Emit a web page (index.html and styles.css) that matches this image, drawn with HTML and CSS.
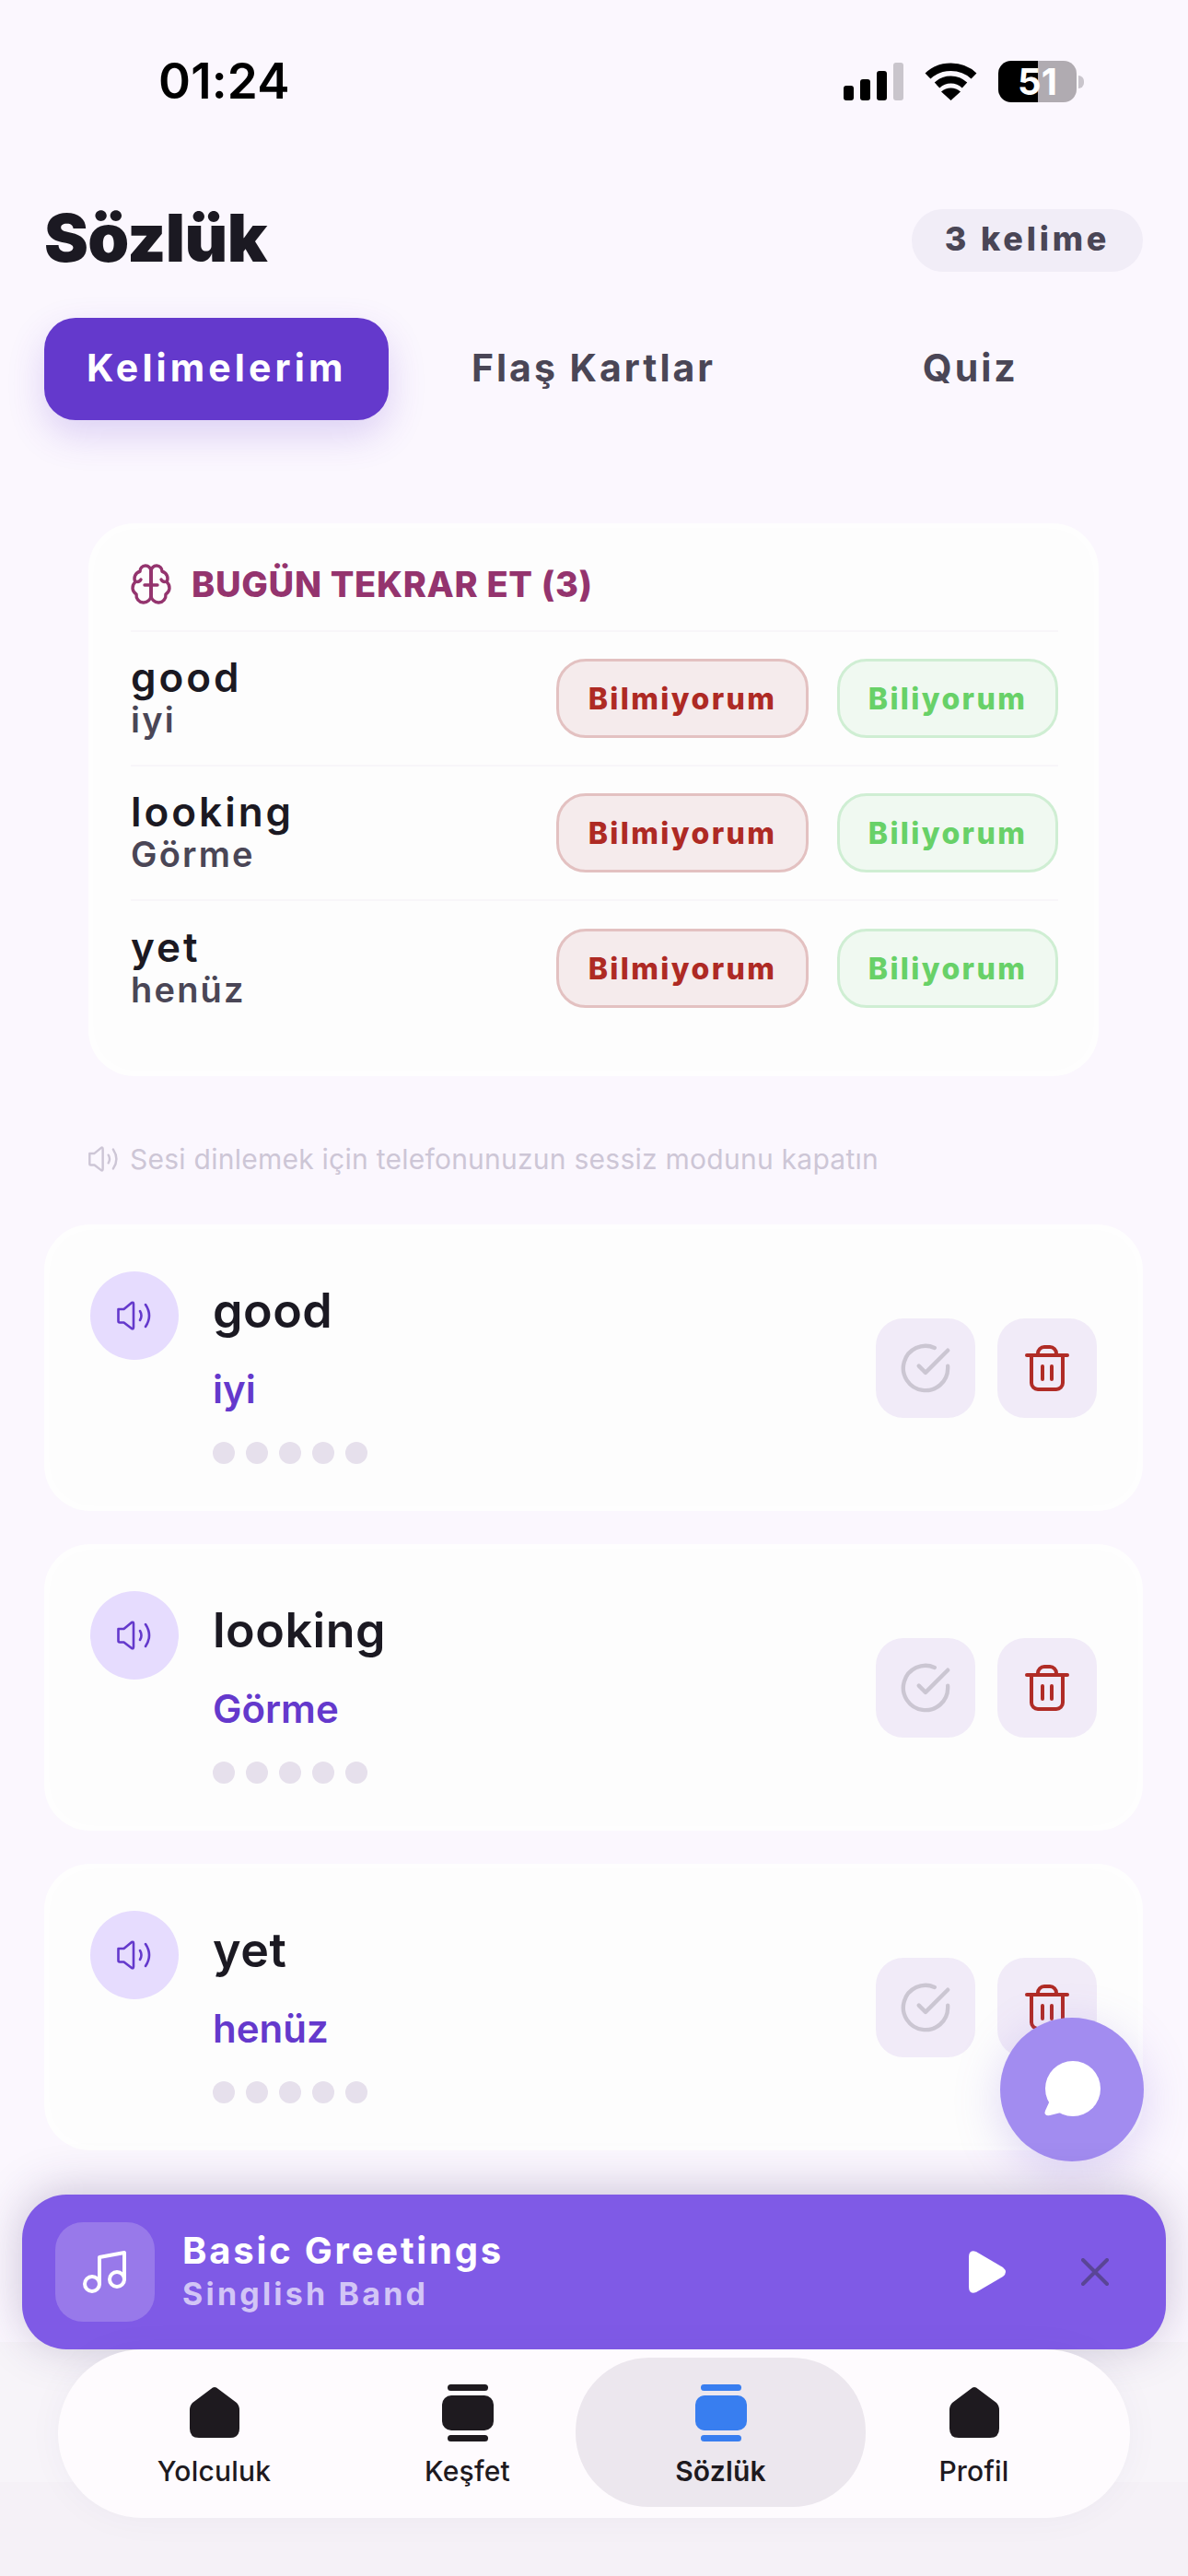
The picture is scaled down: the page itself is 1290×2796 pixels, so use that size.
FILE: index.html
```html
<!DOCTYPE html>
<html lang="tr">

<head>
  <meta charset="UTF-8">
  <title>Sözlük</title>
  <link rel="stylesheet" href="styles.css">
</head>

<body>
  <div class="phone">
    <!-- status bar -->
    <div class="status">
      <span class="clock">01:24</span>
      <div class="status-icons">
        <div class="signal">
          <i class="bar-1"></i><i class="bar-2"></i><i class="bar-3"></i><i class="bar-4"></i>
        </div>
        <svg class="wifi" viewBox="0 0 57 42">
          <path d="M3.5 15.5C17 2.5 40 2.5 53.5 15.5" fill="none" stroke="#000" stroke-width="8.5" />
          <path d="M13.5 25.5C22 17.5 35 17.5 43.5 25.5" fill="none" stroke="#000" stroke-width="8" />
          <path d="M28.500 42L18 32.500C24 27 33 27 39 32.500Z" />
        </svg>
        <div class="battery"><span>51</span></div>
        <i class="battery-nub"></i>
      </div>
    </div>

    <header class="top">
      <h1>Sözlük</h1>
      <span class="count">3 kelime</span>
    </header>

    <nav class="tabs">
      <button class="tab active">Kelimelerim</button>
      <button class="tab">Flaş Kartlar</button>
      <button class="tab">Quiz</button>
    </nav>

    <!-- review -->
    <section class="review">
      <h2>
        <svg viewBox="0 0 24 24" fill="none" stroke="#94346e" stroke-width="1.7" stroke-linecap="round" stroke-linejoin="round">
          <path d="M12 5a3 3 0 1 0-5.997.125 4 4 0 0 0-2.526 5.77 4 4 0 0 0 .556 6.588A4 4 0 1 0 12 18Z" />
          <path d="M12 5a3 3 0 1 1 5.997.125 4 4 0 0 1 2.526 5.77 4 4 0 0 1-.556 6.588A4 4 0 1 1 12 18Z" />
          <path d="M12 5V18M8.500 12.500H15.500M3.500 10.500C5 11 6 10.500 6.500 9.500M20.500 10.500C19 11 18 10.500 17.500 9.500" />
        </svg>
        BUGÜN TEKRAR ET (3)
      </h2>
      <div class="review-row">
        <div class="review-text"><b>good</b><span>iyi</span></div>
        <button class="btn-no">Bilmiyorum</button>
        <button class="btn-yes">Biliyorum</button>
      </div>
      <div class="review-row">
        <div class="review-text"><b>looking</b><span>Görme</span></div>
        <button class="btn-no">Bilmiyorum</button>
        <button class="btn-yes">Biliyorum</button>
      </div>
      <div class="review-row">
        <div class="review-text"><b>yet</b><span>henüz</span></div>
        <button class="btn-no">Bilmiyorum</button>
        <button class="btn-yes">Biliyorum</button>
      </div>
    </section>

    <p class="note">
      <svg viewBox="0 0 38 32" fill="none" stroke="#cdc6d6" stroke-width="2.800" stroke-linecap="round" stroke-linejoin="round">
        <path d="M1.500 9H7.500L16 2Q18 1 18 3.500V28.500Q18 31 16 30L7.500 23.500H3Q1.500 23.500 1.500 22Z" />
        <path d="M25 11Q28 16 25 21M31 4Q39 16 31 28" />
      </svg>
      Sesi dinlemek için telefonunuzun sessiz modunu kapatın
    </p>

    <!-- words -->
    <article class="word-card">
      <button class="sound">
        <svg viewBox="0 0 38 32" fill="none" stroke="#6439cc" stroke-width="2.600" stroke-linecap="round" stroke-linejoin="round">
          <path d="M1.500 9H7.500L16 2Q18 1 18 3.500V28.500Q18 31 16 30L7.500 23.500H3Q1.500 23.500 1.500 22Z" />
          <path d="M25 11Q28 16 25 21M31 4Q39 16 31 28" />
        </svg>
      </button>
      <div class="word-info">
        <h3>good</h3>
        <p>iyi</p>
        <div class="dots"><i></i><i></i><i></i><i></i><i></i></div>
      </div>
      <div class="actions">
        <button class="action">
          <svg viewBox="0 0 24 24" fill="none" stroke="#cbc6d2" stroke-width="1.800" stroke-linecap="round" stroke-linejoin="round">
            <path d="M22 11.080V12a10 10 0 1 1-5.930-9.140" />
            <path d="M22 4L12 14.010l-3-3" />
          </svg>
        </button>
        <button class="action">
          <svg class="trash" viewBox="0 0 48 50" fill="none" stroke="#b02c26" stroke-width="4" stroke-linecap="round" stroke-linejoin="round">
            <path d="M2 11H46M7 11V41A7 7 0 0 0 14 48H34A7 7 0 0 0 41 41V11M14 11V9A7 7 0 0 1 21 2H27A7 7 0 0 1 34 9V11M19 23V37M29 23V37" />
          </svg>
        </button>
      </div>
    </article>

    <article class="word-card">
      <button class="sound">
        <svg viewBox="0 0 38 32" fill="none" stroke="#6439cc" stroke-width="2.600" stroke-linecap="round" stroke-linejoin="round">
          <path d="M1.500 9H7.500L16 2Q18 1 18 3.500V28.500Q18 31 16 30L7.500 23.500H3Q1.500 23.500 1.500 22Z" />
          <path d="M25 11Q28 16 25 21M31 4Q39 16 31 28" />
        </svg>
      </button>
      <div class="word-info">
        <h3>looking</h3>
        <p>Görme</p>
        <div class="dots"><i></i><i></i><i></i><i></i><i></i></div>
      </div>
      <div class="actions">
        <button class="action">
          <svg viewBox="0 0 24 24" fill="none" stroke="#cbc6d2" stroke-width="1.800" stroke-linecap="round" stroke-linejoin="round">
            <path d="M22 11.080V12a10 10 0 1 1-5.930-9.140" />
            <path d="M22 4L12 14.010l-3-3" />
          </svg>
        </button>
        <button class="action">
          <svg class="trash" viewBox="0 0 48 50" fill="none" stroke="#b02c26" stroke-width="4" stroke-linecap="round" stroke-linejoin="round">
            <path d="M2 11H46M7 11V41A7 7 0 0 0 14 48H34A7 7 0 0 0 41 41V11M14 11V9A7 7 0 0 1 21 2H27A7 7 0 0 1 34 9V11M19 23V37M29 23V37" />
          </svg>
        </button>
      </div>
    </article>

    <article class="word-card">
      <button class="sound">
        <svg viewBox="0 0 38 32" fill="none" stroke="#6439cc" stroke-width="2.600" stroke-linecap="round" stroke-linejoin="round">
          <path d="M1.500 9H7.500L16 2Q18 1 18 3.500V28.500Q18 31 16 30L7.500 23.500H3Q1.500 23.500 1.500 22Z" />
          <path d="M25 11Q28 16 25 21M31 4Q39 16 31 28" />
        </svg>
      </button>
      <div class="word-info">
        <h3>yet</h3>
        <p>henüz</p>
        <div class="dots"><i></i><i></i><i></i><i></i><i></i></div>
      </div>
      <div class="actions">
        <button class="action">
          <svg viewBox="0 0 24 24" fill="none" stroke="#cbc6d2" stroke-width="1.800" stroke-linecap="round" stroke-linejoin="round">
            <path d="M22 11.080V12a10 10 0 1 1-5.930-9.140" />
            <path d="M22 4L12 14.010l-3-3" />
          </svg>
        </button>
        <button class="action">
          <svg class="trash" viewBox="0 0 48 50" fill="none" stroke="#b02c26" stroke-width="4" stroke-linecap="round" stroke-linejoin="round">
            <path d="M2 11H46M7 11V41A7 7 0 0 0 14 48H34A7 7 0 0 0 41 41V11M14 11V9A7 7 0 0 1 21 2H27A7 7 0 0 1 34 9V11M19 23V37M29 23V37" />
          </svg>
        </button>
      </div>
    </article>

    <!-- floating chat -->
    <button class="fab">
      <svg viewBox="0 0 64 64" fill="#fff">
        <circle cx="33" cy="31" r="30" />
        <path d="M8 44L3 55Q1 61 8 60L24 56Z" />
      </svg>
    </button>

    <!-- bottom dock -->
    <div class="dock">
      <div class="player">
        <div class="art">
          <svg viewBox="0 0 52 52" fill="none" stroke="#fff" stroke-width="4" stroke-linecap="round" stroke-linejoin="round">
            <circle cx="12" cy="39" r="8" />
            <circle cx="39" cy="34" r="8" />
            <path d="M20 39V10L47 5V34" />
          </svg>
        </div>
        <div class="track">
          <strong>Basic Greetings</strong>
          <span>Singlish Band</span>
        </div>
        <svg class="play" viewBox="0 0 41 46" fill="#fff">
          <path d="M0 7Q0 -2 8 1L37 18Q43 23 37 28L8 45Q0 48 0 39Z" />
        </svg>
        <svg class="close" viewBox="0 0 30 30" fill="none" stroke="#5a4596" stroke-width="4" stroke-linecap="round">
          <path d="M2 2L28 28M28 2L2 28" />
        </svg>
      </div>

      <nav class="bottom-nav">
        <a class="nav-item">
          <svg class="nav-home" viewBox="0 0 54 56">
            <path d="M23 3Q27 -1 31 3L51 18Q54 21 54 26V46Q54 56 44 56H10Q0 56 0 46V26Q0 21 3 18Z" />
          </svg>
          Yolculuk
        </a>
        <a class="nav-item">
          <svg class="nav-cards" viewBox="0 0 56 62">
            <rect x="6" width="44" height="7" rx="3.500" />
            <rect y="12" width="56" height="38" rx="10" />
            <rect x="6" y="55" width="44" height="7" rx="3.500" />
          </svg>
          Keşfet
        </a>
        <a class="nav-item current">
          <svg class="nav-cards" viewBox="0 0 56 62">
            <rect x="6" width="44" height="7" rx="3.500" />
            <rect y="12" width="56" height="38" rx="10" />
            <rect x="6" y="55" width="44" height="7" rx="3.500" />
          </svg>
          Sözlük
        </a>
        <a class="nav-item">
          <svg class="nav-home" viewBox="0 0 54 56">
            <path d="M23 3Q27 -1 31 3L51 18Q54 21 54 26V46Q54 56 44 56H10Q0 56 0 46V26Q0 21 3 18Z" />
          </svg>
          Profil
        </a>
      </nav>
    </div>
  </div>
</body>

</html>
```

FILE: styles.css
```css
* {
  box-sizing: border-box;
}

body {
  margin: 0;
  background-color: #fbf7fe;
  font-family: Inter, "Noto Sans", sans-serif;
  color: #1b1922;
}

button {
  font-family: inherit;
  border: none;
  padding: 0;
}

.phone {
  position: relative;
  width: 1290px;
  height: 2796px;
  overflow: hidden;
  background-color: #fbf7fe;
}

/* status bar */
.status {
  height: 176px;
  display: flex;
  align-items: center;
  justify-content: space-between;
  padding: 0 113px 0 172px;
}

.clock {
  font-size: 53px;
  font-weight: 600;
  color: #000;
  letter-spacing: 0.2px;
}

.status-icons {
  display: flex;
  align-items: flex-end;
  height: 46px;
}

.signal {
  display: flex;
  align-items: flex-end;
  gap: 7px;
  height: 41px;
  margin-bottom: 2px;
}

.signal i {
  width: 11px;
  border-radius: 3px;
  background-color: #000;
}

.bar-1 {
  height: 16px;
}

.bar-2 {
  height: 23px;
}

.bar-3 {
  height: 32px;
}

.signal .bar-4 {
  height: 41px;
  background-color: #c9c5cc;
}

.wifi {
  width: 57px;
  height: 42px;
  margin: 0 23px;
  margin-bottom: 2px;
}

.battery {
  width: 85px;
  height: 45px;
  border-radius: 14px;
  background: linear-gradient(90deg, #000 51%, #b0abb1 51%);
  color: #fff;
  font-size: 40px;
  font-weight: 700;
  line-height: 45px;
  text-align: center;
}

.battery-nub {
  width: 6px;
  height: 14px;
  margin: 0 0 15px 2px;
  border-radius: 0 7px 7px 0;
  background-color: #c9c5cc;
}

/* header */
.top {
  height: 169px;
  display: flex;
  align-items: center;
  justify-content: space-between;
  padding: 0 49px 0 48px;
}

.top h1 {
  margin: 0 0 6px;
  font-size: 72px;
  font-weight: 900;
  letter-spacing: -0.6px;
  color: #1b1922;
}

.count {
  width: 251px;
  height: 68px;
  border-radius: 34px;
  background-color: #f1edf7;
  color: #4a4656;
  font-size: 36px;
  font-weight: 800;
  line-height: 65px;
  letter-spacing: 3.8px;
  text-align: center;
}

/* tabs */
.tabs {
  display: flex;
  gap: 35px;
  padding: 0 49px 0 48px;
}

.tab {
  flex: 1;
  height: 111px;
  padding-bottom: 3px;
  border-radius: 34px;
  background: none;
  color: #4a4656;
  font-size: 41px;
  font-weight: 700;
  letter-spacing: 3px;
}

.tab.active {
  background-color: #6439cc;
  color: #fff;
  letter-spacing: 4.1px;
  box-shadow: 0 16px 40px rgba(100, 57, 204, 0.2);
}

/* review card */
.review {
  margin: 112px 97px 0 96px;
  height: 600px;
  padding: 0 44px 0 46px;
  border-radius: 50px;
  background-color: #fdfdfd;
  box-shadow: inset 0 0 24px #fff;
}

.review h2 {
  height: 118px;
  margin: 0;
  padding-top: 16px;
  display: flex;
  align-items: center;
  gap: 20px;
  border-bottom: 2px solid #f8f6f9;
  color: #94346e;
  font-size: 38px;
  font-weight: 800;
  letter-spacing: 0.7px;
}

.review h2 svg {
  width: 48px;
  height: 48px;
  margin-left: -2px;
}

.review-row {
  height: 146px;
  display: flex;
  align-items: center;
  gap: 31px;
  border-bottom: 2px solid #f8f6f9;
}

.review-row:last-child {
  border-bottom: none;
}

.review-text {
  flex: 1;
  display: flex;
  flex-direction: column;
}

.review-text b {
  font-size: 44px;
  font-weight: 600;
  line-height: 46px;
  letter-spacing: 3px;
}

.review-text span {
  font-size: 38px;
  font-weight: 600;
  line-height: 46px;
  letter-spacing: 2.2px;
  color: #4a4656;
}

.btn-no,
.btn-yes {
  height: 86px;
  border-radius: 32px;
  border: 3px solid;
  font-size: 32px;
  font-weight: 800;
  letter-spacing: 2.4px;
}

.btn-no {
  width: 274px;
  background-color: #f5ebec;
  border-color: #e3c1c1;
  color: #ae2a24;
}

.btn-yes {
  width: 240px;
  background-color: #f0f9f1;
  border-color: #cfeed3;
  color: #68d168;
}

/* silent mode note */
.note {
  height: 40px;
  margin: 70px 0 51px 96px;
  display: flex;
  align-items: center;
  gap: 12px;
  font-size: 30px;
  letter-spacing: 0.25px;
  color: #cdc6d6;
}

.note svg {
  width: 33px;
  height: 28px;
}

/* word cards */
.word-card {
  height: 311px;
  margin: 0 49px 36px 48px;
  padding: 51px 50px;
  display: flex;
  border-radius: 50px;
  background-color: #fdfdfd;
  box-shadow: inset 0 0 24px #fff;
}

.sound {
  width: 96px;
  height: 96px;
  flex-shrink: 0;
  display: flex;
  align-items: center;
  justify-content: center;
  border-radius: 50%;
  background-color: #e6dcfe;
}

.sound svg {
  width: 38px;
  height: 32px;
}

.word-info {
  flex: 1;
  margin-left: 37px;
  padding-top: 10px;
}

.word-info h3 {
  margin: 0;
  font-size: 52px;
  font-weight: 600;
  line-height: 66px;
  letter-spacing: 0.5px;
}

.word-info p {
  margin: 26px 0 0;
  font-size: 42px;
  font-weight: 600;
  line-height: 52px;
  color: #6439cc;
}

.dots {
  display: flex;
  gap: 12px;
  margin-top: 31px;
}

.dots i {
  width: 24px;
  height: 24px;
  border-radius: 50%;
  background-color: #e6e0ec;
}

.actions {
  display: flex;
  align-self: center;
  gap: 24px;
}

.action {
  width: 108px;
  height: 108px;
  display: flex;
  align-items: center;
  justify-content: center;
  border-radius: 30px;
  background-color: #f1ebf8;
}

.action svg {
  width: 58px;
  height: 58px;
}

.action .trash {
  width: 48px;
  height: 50px;
}

/* chat button */
.fab {
  position: absolute;
  left: 1086px;
  top: 2190px;
  width: 156px;
  height: 156px;
  display: flex;
  align-items: center;
  justify-content: center;
  border-radius: 50%;
  background-color: #a28cf0;
  box-shadow: 0 12px 50px rgba(130, 100, 220, 0.25);
}

.fab svg {
  width: 64px;
  height: 64px;
}

/* player and nav */
.dock {
  position: absolute;
  left: 0;
  right: 0;
  top: 2382px;
  bottom: 0;
  padding: 0 24px;
  background: linear-gradient(#fbf7fe00 0, #fbf7fe00 160px, #f7f4f9 160px, #f7f4f9 312px, #f5f1f7 312px);
}

.player {
  position: relative;
  height: 168px;
  display: flex;
  align-items: center;
  padding: 0 62px 0 36px;
  border-radius: 48px;
  background-color: #7f5ae6;
  box-shadow: 0 -4px 50px rgba(60, 40, 100, 0.25);
}

.art {
  width: 108px;
  height: 108px;
  display: flex;
  align-items: center;
  justify-content: center;
  border-radius: 30px;
  background-color: #9879ea;
}

.art svg {
  width: 52px;
  height: 52px;
}

.track {
  flex: 1;
  margin-left: 30px;
  display: flex;
  flex-direction: column;
}

.track strong {
  color: #fff;
  font-size: 40px;
  font-weight: 700;
  line-height: 48px;
  letter-spacing: 2.8px;
}

.track span {
  color: #d2c5f6;
  font-size: 34px;
  font-weight: 700;
  line-height: 46px;
  letter-spacing: 3.2px;
}

.play {
  width: 41px;
  height: 46px;
  margin-right: 81px;
}

.close {
  width: 30px;
  height: 30px;
}

.bottom-nav {
  position: relative;
  height: 183px;
  margin: 0 39px;
  padding: 9px 32px 12px;
  display: grid;
  grid-template-columns: repeat(4, 1fr);
  border-radius: 92px;
  background-color: #fefbfe;
  box-shadow: 0 0 40px rgba(60, 40, 100, 0.04);
}

.nav-item {
  display: flex;
  flex-direction: column;
  align-items: center;
  padding-top: 29px;
  font-size: 30px;
  font-weight: 500;
  letter-spacing: 0.2px;
  color: #1e1a1f;
}

.nav-item svg {
  fill: #1e1a1f;
  margin-bottom: 18px;
}

.nav-item .nav-home {
  width: 54px;
  height: 56px;
  margin-top: 2px;
}

.nav-item .nav-cards {
  width: 56px;
  height: 62px;
  margin-bottom: 14px;
}

.nav-item.current {
  margin: 0 -20px;
  border-radius: 80px;
  background-color: #ece7ee;
  font-weight: 600;
}

.nav-item.current svg {
  fill: #387ef0;
}
```
